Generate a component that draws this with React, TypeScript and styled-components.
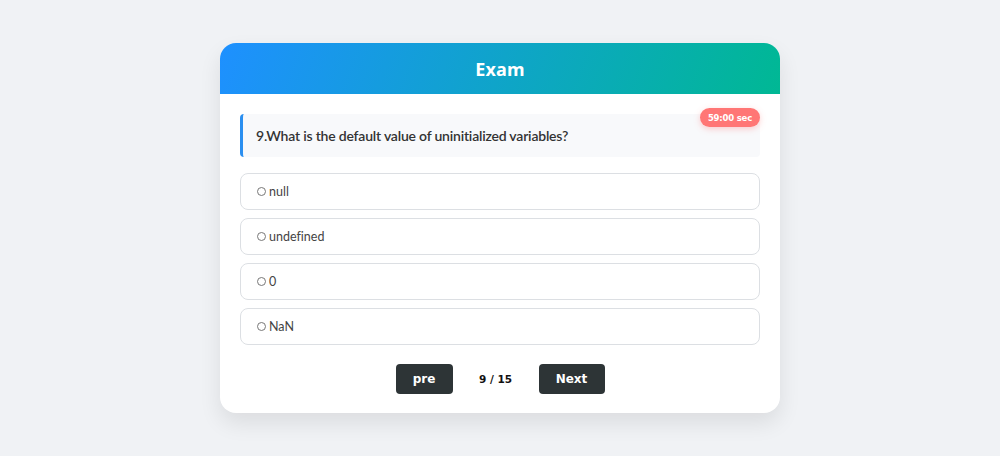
import React, { useState } from "react";
import styled, { createGlobalStyle } from "styled-components";

const GlobalStyle = createGlobalStyle`
  html, body {
    margin: 0;
    padding: 0;
    background: #f0f2f5;
    font-family: "Noto Sans", "Open Sans", sans-serif;
  }
`;

const options = ["null", "undefined", "0", "NaN"];

const App: React.FC = () => {
  const [selected, setSelected] = useState<number | null>(null);
  return (
    <>
      <GlobalStyle />
      <Page>
        <Card>
          <Header>Exam</Header>
          <Body>
            <QuestionBox>
              <Timer>59:00 sec</Timer>
              9.What is the default value of uninitialized variables?
            </QuestionBox>
            <OptionList>
              {options.map((opt, i) => (
                <Option key={opt} onClick={() => setSelected(i)}>
                  <Radio $checked={selected === i} />
                  {opt}
                </Option>
              ))}
            </OptionList>
            <Footer>
              <NavButton $wide={false}>pre</NavButton>
              <Counter>9 / 15</Counter>
              <NavButton $wide>Next</NavButton>
            </Footer>
          </Body>
        </Card>
      </Page>
    </>
  );
};

const Page = styled.div`
  height: 456px;
  display: flex;
  align-items: center;
  justify-content: center;
`;

const Card = styled.div`
  width: 560px;
  background: #fff;
  border-radius: 16px;
  box-shadow: 0 10px 22px rgba(0, 0, 0, 0.09);
  overflow: hidden;
`;

const Header = styled.div`
  height: 51px;
  display: flex;
  align-items: center;
  justify-content: center;
  background: linear-gradient(110deg, #1e90ff 0%, #00b894 100%);
  color: #fff;
  font-size: 18px;
  font-weight: 700;
  letter-spacing: 0.2px;
`;

const Body = styled.div`
  padding: 20px 20px 19px;
  font-family: "Lato", "Noto Sans", sans-serif;
  font-variant-ligatures: none;
`;

const QuestionBox = styled.div`
  position: relative;
  height: 43px;
  display: flex;
  align-items: center;
  padding-left: 13px;
  background: #f8f9fb;
  border-left: 3px solid #2b8ff0;
  border-radius: 4px;
  color: #333;
  font-size: 14px;
  font-weight: 600;
  letter-spacing: -0.2px;
`;

const Timer = styled.span`
  position: absolute;
  top: -6px;
  right: 0;
  height: 19px;
  padding: 0 8px;
  display: flex;
  align-items: center;
  background: #ff7675;
  color: #fff;
  border-radius: 10px;
  font-family: "DejaVu Sans", Verdana, sans-serif;
  font-size: 8.5px;
  font-weight: 700;
  letter-spacing: -0.2px;
  box-shadow: 0 2px 6px rgba(255, 118, 117, 0.35);
`;

const OptionList = styled.div`
  display: flex;
  flex-direction: column;
  gap: 8px;
  margin-top: 16px;
`;

const Option = styled.div`
  height: 37px;
  box-sizing: border-box;
  display: flex;
  align-items: center;
  gap: 3px;
  padding-left: 16px;
  border: 1px solid #dcdfe3;
  border-radius: 8px;
  color: #444;
  font-size: 12.5px;
  cursor: pointer;
`;

const Radio = styled.span<{ $checked: boolean }>`
  width: 7px;
  height: 7px;
  border-radius: 50%;
  border: 1px solid #777;
  background: ${(p) => (p.$checked ? "#2b8ff0" : "#fff")};
`;

const Footer = styled.div`
  display: flex;
  align-items: center;
  justify-content: center;
  margin-top: 19px;
`;

const NavButton = styled.button<{ $wide: boolean }>`
  width: ${(p) => (p.$wide ? "66px" : "57px")};
  height: 30px;
  border: none;
  border-radius: 4px;
  background: #2d3436;
  color: #fff;
  font-family: "DejaVu Sans", Verdana, sans-serif;
  font-size: 12px;
  font-weight: 700;
  cursor: pointer;
`;

const Counter = styled.span`
  width: 86px;
  text-align: center;
  font-family: "DejaVu Sans", Verdana, sans-serif;
  font-size: 10.5px;
  font-weight: 700;
  color: #111;
`;

export default App;
